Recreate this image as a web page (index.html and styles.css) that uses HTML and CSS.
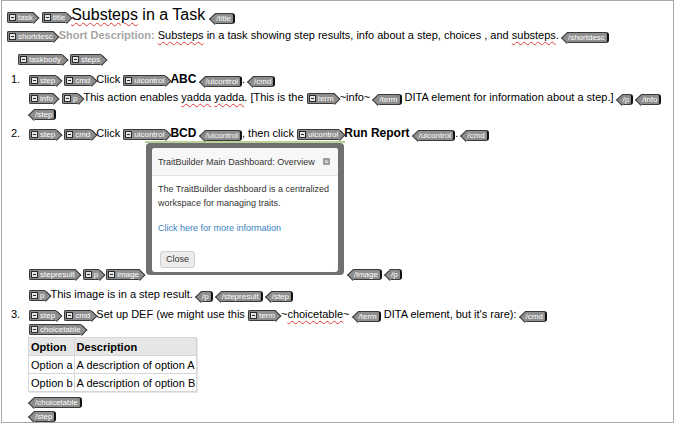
FILE: index.html
```html
<!DOCTYPE html>
<html>
<head>
<meta charset="utf-8">
<link rel="stylesheet" href="styles.css">
</head>
<body>
<div class="page">
  <div class="row title-row"><span class="tag s"><i></i>task</span> <span class="tag s"><i></i>title</span><span class="title"><span class="sp">Substeps</span> in a Task</span> <span class="tag e">/title</span></div>
  <div class="row desc-row"><span class="tag s"><i></i>shortdesc</span><span class="ph">Short Description:</span> <span class="sp">Substeps</span> in a task showing step results, info about a step, choices , and <span class="sp">substeps</span>. <span class="tag e">/shortdesc</span></div>
  <div class="row body-row"><span class="tag s"><i></i>taskbody</span> <span class="tag s"><i></i>steps</span></div>

  <div class="step step1">
    <span class="num">1.</span>
    <div class="sbody">
      <div class="row"><span class="tag s"><i></i>step</span> <span class="tag s"><i></i>cmd</span>Click <span class="tag s"><i></i>uicontrol</span><b>ABC</b> <span class="tag e">/uicontrol</span>. <span class="tag e">/cmd</span></div>
      <div class="row info"><span class="tag s"><i></i>info</span> <span class="tag s"><i></i>p</span>This action enables <span class="sp">yadda</span> <span class="sp">yadda</span>. [This is the <span class="tag s"><i></i>term</span>~info~ <span class="tag e">/term</span> DITA element for information about a step.] <span class="tag e">/p</span> <span class="tag e">/info</span></div>
      <div class="row"><span class="tag e">/step</span></div>
    </div>
  </div>

  <div class="step step2">
    <span class="num">2.</span>
    <div class="sbody">
      <div class="row"><span class="tag s"><i></i>step</span> <span class="tag s"><i></i>cmd</span>Click <span class="tag s"><i></i>uicontrol</span><b>BCD</b> <span class="tag e">/uicontrol</span>, then click <span class="tag s"><i></i>uicontrol</span><b>Run Report</b> <span class="tag e">/uicontrol</span>. <span class="tag e">/cmd</span></div>
      <div class="stepres">
        <span class="tag s"><i></i>stepresult</span>
        <span class="tag s"><i></i>p</span>
        <span class="tag s"><i></i>image</span>
        <div class="shot">
          <div class="frame">
            <div class="dlg">
              <div class="dlg-head"><span>TraitBuilder Main Dashboard: Overview</span><span class="x">×</span></div>
              <div class="dlg-body">
                <p>The TraitBuilder dashboard is a centralized workspace for managing traits.</p>
                <p class="link">Click here for more information</p>
                <span class="btn">Close</span>
              </div>
            </div>
          </div>
        </div>
        <span class="tag e">/image</span>
        <span class="tag e">/p</span>
      </div>
      <div class="row presult"><span class="tag s"><i></i>p</span>This image is in a step result. <span class="tag e">/p</span> <span class="tag e">/stepresult</span> <span class="tag e">/step</span></div>
    </div>
  </div>

  <div class="step step3">
    <span class="num">3.</span>
    <div class="sbody">
      <div class="row"><span class="tag s"><i></i>step</span> <span class="tag s"><i></i>cmd</span>Set up DEF (we might use this <span class="tag s"><i></i>term</span>~<span class="sp">choicetable</span>~ <span class="tag e">/term</span> DITA element, but it's rare): <span class="tag e">/cmd</span></div>
      <div class="tagrow ct"><span class="tag s"><i></i>choicetable</span></div>
      <table class="choices">
        <tr><th>Option</th><th>Description</th></tr>
        <tr><td>Option a</td><td>A description of option A</td></tr>
        <tr><td>Option b</td><td>A description of option B</td></tr>
      </table>
      <div class="tagrow ect"><span class="tag e">/choicetable</span></div>
      <div class="tagrow est"><span class="tag e">/step</span></div>
    </div>
  </div>
</div>
</body>
</html>
```

FILE: styles.css
```css
html, body {
  margin: 0;
  padding: 0;
  background: #fff;
}
body {
  font-family: "Liberation Sans", Arial, sans-serif;
  font-size: 11px;
  color: #000;
}
.page {
  box-sizing: border-box;
  margin-left: 1px;
  width: 673px;
  height: 423px;
  border: 1px solid #a9a9a9;
  padding: 4px 0 0 5px;
  overflow: hidden;
}
.row {
  white-space: nowrap;
  line-height: 15px;
  height: 15px;
}
.title-row {
  height: 20px;
  line-height: 20px;
}
.title {
  font-size: 16px;
}
.title-row .tag.e {
  margin-left: 7px;
}
.desc-row {
  margin-top: 3px;
}
.ph {
  color: #a6a6a6;
  font-weight: bold;
}
.body-row {
  margin-top: 8px;
  padding-left: 11px;
}
b {
  font-size: 12px;
}
.sp {
  text-decoration: underline wavy #e23a3a;
  text-decoration-thickness: 1px;
  text-underline-offset: 2px;
}

/* tags */
.tag {
  display: inline-flex;
  align-items: center;
  box-sizing: border-box;
  height: 11px;
  font-size: 8px;
  line-height: 9px;
  color: #fff;
  background: #8e8e8e;
  border: 1px solid #3a3a3a;
  vertical-align: -1px;
  position: relative;
  isolation: isolate;
  white-space: nowrap;
}
.tag i {
  display: inline-block;
  box-sizing: border-box;
  width: 7px;
  height: 7px;
  margin-right: 2px;
  border: 1px solid #2a2a2a;
  background: linear-gradient(#2a2a2a, #2a2a2a) center / 3px 1px no-repeat, #e6e6e6;
}
.tag.s {
  border-right: 0;
  border-radius: 2px 0 0 2px;
  padding: 0 1px 0 1px;
  margin-right: 5px;
}
.tag.s::after {
  content: "";
  position: absolute;
  right: -4px;
  top: 1px;
  width: 6.5px;
  height: 6.5px;
  background: #8e8e8e;
  border-top: 1px solid #3a3a3a;
  border-right: 1px solid #3a3a3a;
  transform: rotate(45deg);
  z-index: -1;
}
.tag.e {
  border-left: 0;
  border-right: 2px solid #111;
  border-radius: 0 3px 3px 0;
  padding: 0 2px 0 1px;
  margin-left: 5px;
}
.tag.e::before {
  content: "";
  position: absolute;
  left: -4px;
  top: 1px;
  width: 6.5px;
  height: 6.5px;
  background: #8e8e8e;
  border-bottom: 1px solid #3a3a3a;
  border-left: 1px solid #3a3a3a;
  transform: rotate(45deg);
  z-index: -1;
}

/* steps */
.step {
  display: flex;
}
.num {
  box-sizing: border-box;
  width: 22px;
  padding-left: 4px;
  line-height: 15px;
  flex: none;
}
.sbody {
  display: flex;
  flex-direction: column;
  align-items: flex-start;
}
.step1 {
  margin-top: 6px;
}
.info {
  margin-top: 3px;
}
.step2 {
  margin-top: 6px;
}
.stepres {
  display: flex;
  align-items: flex-end;
  white-space: nowrap;
}
.stepres .tag.s {
  margin-right: 7px;
}
.stepres .tag.e {
  margin-left: 8px;
}
.stepres .shot {
  margin-bottom: 5px;
  margin-left: -2px;
}
.presult {
  margin-top: 7px;
}

/* screenshot of dialog */
.shot {
  box-sizing: border-box;
  width: 200px;
  height: 134px;
  border-top: 2px solid #bcd09a;
  padding: 0 1px;
}
.frame {
  box-sizing: border-box;
  height: 132px;
  background: #707070;
  border-radius: 4px;
  padding: 5px 6px 3px 6px;
}
.dlg {
  height: 124px;
  background: #fff;
  border-radius: 3px;
  font-size: 9px;
  color: #333;
  overflow: hidden;
}
.dlg-head {
  display: flex;
  justify-content: space-between;
  align-items: center;
  height: 27px;
  padding: 0 8px 0 6px;
  background: #f7f7f7;
  border-bottom: 1px solid #e2e2e2;
}
.x {
  display: inline-flex;
  align-items: center;
  justify-content: center;
  width: 7px;
  height: 7px;
  background: #9a9a9a;
  color: #fff;
  font-size: 8px;
  line-height: 7px;
  border-radius: 1px;
}
.dlg-body {
  padding: 6px 6px 0 6px;
}
.dlg-body p {
  margin: 0;
  line-height: 14px;
  white-space: normal;
}
.dlg-body .link {
  margin-top: 11px;
  color: #3a7fc0;
}
.btn {
  display: inline-block;
  margin-top: 16px;
  margin-left: 2px;
  padding: 0 5px;
  height: 15px;
  line-height: 15px;
  font-size: 9px;
  color: #333;
  background: #ececec;
  border: 1px solid #cfcfcf;
  border-radius: 3px;
}

/* step 3 */
.step3 {
  margin-top: 5px;
}
.tagrow {
  height: 12px;
  line-height: 12px;
  display: flex;
  align-items: center;
}
.ct {
  margin-top: 1px;
}
.choices {
  margin-top: 2px;
  margin-left: -1px;
  border-collapse: collapse;
  border: 1px solid #cfcfcf;
  box-shadow: 1px 1px 0 #e6e6e6;
}
.choices th, .choices td {
  border: 1px solid #d6d6d6;
  padding: 0 1px 0 2px;
  height: 17px;
  line-height: 16px;
  text-align: left;
  white-space: nowrap;
}
.choices th {
  background: #e6e6e6;
  font-weight: bold;
}
.ect {
  margin-top: 4px;
}
.est {
  margin-top: 2px;
}
```
